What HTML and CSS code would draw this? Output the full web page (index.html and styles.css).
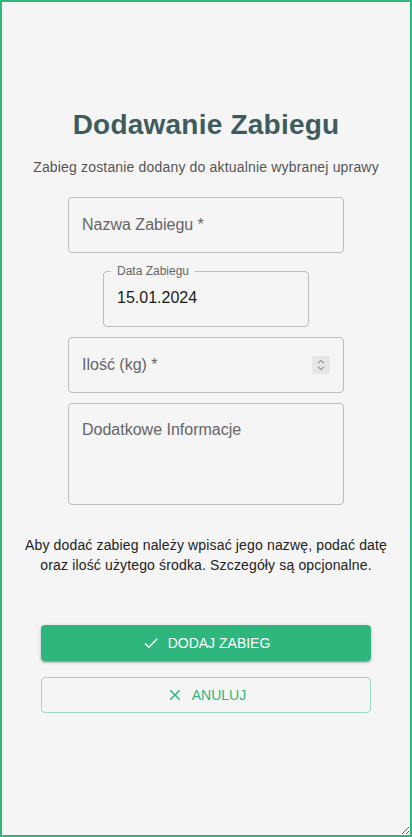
FILE: index.html
```html
<!DOCTYPE html>
<html lang="pl">
<head>
<meta charset="utf-8">
<title>Dodawanie Zabiegu</title>
<link rel="stylesheet" href="styles.css">
</head>
<body>
<div class="frame">
  <h1 class="title">Dodawanie Zabiegu</h1>
  <p class="subtitle">Zabieg zostanie dodany do aktualnie wybranej uprawy</p>

  <div class="field wide"><span class="placeholder">Nazwa Zabiegu *</span></div>

  <div class="field date">
    <span class="legend">Data Zabiegu</span>
    <span class="value">15.01.2024</span>
  </div>

  <div class="field wide qty">
    <span class="placeholder">Ilość (kg) *</span>
    <span class="spinner">
      <svg width="18" height="18" viewBox="0 0 18 18" aria-hidden="true">
        <path d="M6 7.2 9 4.4 12 7.2" fill="none" stroke="#8a8a8a" stroke-width="1.1"/>
        <path d="M6 10.8 9 13.6 12 10.8" fill="none" stroke="#8a8a8a" stroke-width="1.1"/>
      </svg>
    </span>
  </div>

  <div class="field wide area"><span class="placeholder">Dodatkowe Informacje</span></div>

  <p class="info">Aby dodać zabieg należy wpisać jego nazwę, podać datę oraz ilość użytego środka. Szczegóły są opcjonalne.</p>

  <button class="btn primary" type="button">
    <svg class="icon" width="18" height="18" viewBox="0 0 24 24" aria-hidden="true"><path fill="currentColor" d="M9 16.17 4.83 12l-1.42 1.41L9 19 21 7l-1.41-1.41z"/></svg>
    <span>DODAJ ZABIEG</span>
  </button>
  <button class="btn outline" type="button">
    <svg class="icon" width="18" height="18" viewBox="0 0 24 24" aria-hidden="true"><path fill="currentColor" d="M19 6.41 17.59 5 12 10.59 6.41 5 5 6.41 10.59 12 5 17.59 6.41 19 12 13.41 17.59 19 19 17.59 13.41 12z"/></svg>
    <span>ANULUJ</span>
  </button>
</div>
</body>
</html>
```
FILE: styles.css
```css
html, body {
  margin: 0;
  padding: 0;
  background: #f5f5f5;
}

.frame {
  box-sizing: border-box;
  width: 412px;
  height: 837px;
  border: 2px solid #2eb67d;
  background: #f5f5f5;
  resize: both;
  overflow: auto;
  display: flex;
  flex-direction: column;
  align-items: center;
  padding-top: 106px;
  font-family: "Liberation Sans", Arial, sans-serif;
}

.title {
  margin: 0;
  font-size: 28px;
  line-height: 33.6px;
  font-weight: 700;
  letter-spacing: 0.22px;
  color: #3e5c5e;
}

.subtitle {
  margin: 15px 0 0;
  font-size: 14px;
  line-height: 20px;
  letter-spacing: 0.17px;
  color: #555555;
}

.field {
  position: relative;
  box-sizing: border-box;
  height: 56px;
  border: 1px solid #bdbdbd;
  border-radius: 4px;
  padding: 0 13px;
  display: flex;
  align-items: center;
  font-size: 16px;
  line-height: 19px;
}

.wide {
  width: 276px;
  margin-top: 10px;
}

.field.wide:first-of-type {
  margin-top: 20px;
}

.placeholder {
  color: #656565;
}

.date {
  width: 206px;
  margin-top: 18px;
}

.legend {
  position: absolute;
  top: -8px;
  left: 7px;
  padding: 0 6px;
  background: #f5f5f5;
  font-size: 12px;
  line-height: 14px;
  color: #656565;
}

.value {
  color: #1a1a1a;
  margin-top: -2px;
}

.qty {
  justify-content: space-between;
}

.spinner {
  width: 18px;
  height: 18px;
  background: #e6e6e9;
  border-radius: 2px;
  display: flex;
}

.area {
  height: 102px;
  align-items: flex-start;
  padding-top: 16px;
}

.info {
  margin: 30px 0 0;
  width: 384px;
  text-align: center;
  font-size: 14px;
  line-height: 20px;
  letter-spacing: 0.15px;
  color: #222222;
}

.btn {
  box-sizing: border-box;
  width: 330px;
  height: 36px;
  border-radius: 4px;
  display: flex;
  align-items: center;
  justify-content: center;
  gap: 8px;
  font-family: "Liberation Sans", Arial, sans-serif;
  font-size: 14px;
  line-height: 16px;
  padding: 0;
  cursor: pointer;
}

.primary {
  margin-top: 50px;
  border: none;
  background: #2eb67d;
  color: #ffffff;
  box-shadow: 0 3px 1px -2px rgba(0,0,0,0.2), 0 2px 2px 0 rgba(0,0,0,0.14), 0 1px 5px 0 rgba(0,0,0,0.12);
}

.outline {
  margin-top: 16px;
  border: 1px solid #97dbbe;
  background: transparent;
  color: #2eb67d;
}

.icon {
  display: block;
  flex: none;
}
```
